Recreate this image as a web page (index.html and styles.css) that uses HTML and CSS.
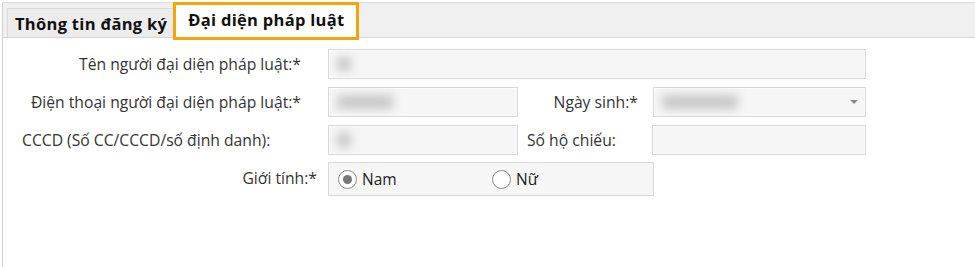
FILE: index.html
```html
<!DOCTYPE html>
<html lang="vi">
<head>
    <meta charset="UTF-8">
    <meta name="viewport" content="width=device-width, initial-scale=1.0">
    <title>Đại diện pháp luật</title>
    <link rel="stylesheet" href="styles.css">
</head>
<body>
    <div class="tabs">
        <div class="tab">Thông tin đăng ký</div>
        <div class="tab active">Đại diện pháp luật</div>
    </div>

    <div class="panel">
        <div class="form">
            <!-- Hàng 1 -->
            <label class="lbl">Tên người đại diện pháp luật:*</label>
            <div class="field wide"><span class="blur short"></span></div>

            <!-- Hàng 2 -->
            <label class="lbl">Điện thoại người đại diện pháp luật:*</label>
            <div class="field"><span class="blur"></span></div>
            <label class="lbl2 right">Ngày sinh:*</label>
            <div class="field select"><span class="blur long"></span><span class="arrow"></span></div>

            <!-- Hàng 3 -->
            <label class="lbl left">CCCD (Số CC/CCCD/số định danh):</label>
            <div class="field"><span class="blur short"></span></div>
            <label class="lbl2">Số hộ chiếu:</label>
            <div class="field"></div>

            <!-- Hàng 4 -->
            <label class="lbl gender">Giới tính:*</label>
            <div class="radios">
                <label class="radio"><span class="dot checked"></span>Nam</label>
                <label class="radio"><span class="dot"></span>Nữ</label>
            </div>
        </div>
    </div>
</body>
</html>
```
FILE: styles.css
```css
body {
    margin: 0;
    font-family: "Open Sans", sans-serif;
    background-color: #ffffff;
    color: #333;
}
.tabs {
    display: flex;
    align-items: flex-end;
    height: 34px;
    margin-top: 2px;
    margin-left: 2px;
    padding-left: 4px;
    background-color: #f0f0f0;
    border-top: 1px solid #dcdcdc;
    border-left: 1px solid #d0d0d0;
    border-bottom: 1px solid #d6d6d6;
}
.tab {
    font-weight: bold;
    font-size: 16.5px;
    letter-spacing: 0.3px;
    color: #111;
    height: 28px;
    line-height: 30px;
    padding: 0 6px 0 7px;
    background-color: #ececec;
    border-left: 1px solid #d8d8d8;
    border-top: 1px solid #d8d8d8;
}
.tab.active {
    background-color: #fff;
    border: 3px solid #f5a50a;
    height: 32px;
    line-height: 30px;
    margin-top: -3px;
    margin-bottom: -3px;
    padding: 0 11px 0 12px;
    position: relative;
}
.panel {
    margin-left: 2px;
    border-left: 1px solid #d0d0d0;
    height: 229px;
}
.form {
    display: grid;
    grid-template-columns: 325px 190px 134px 214px;
    grid-auto-rows: 30px;
    row-gap: 8px;
    padding-top: 11px;
    font-size: 15.7px;
    align-items: center;
}
.lbl {
    text-align: right;
    padding-right: 27px;
    color: #333;
    white-space: nowrap;
}
.lbl.left {
    text-align: left;
    padding-left: 19px;
}
.lbl.gender {
    padding-right: 11px;
}
.lbl2 {
    padding-left: 9px;
    white-space: nowrap;
}
.lbl2.right {
    text-align: right;
    padding-right: 14px;
}
.field {
    height: 28px;
    border: 1px solid #d8d8d8;
    background-color: #f6f6f6;
    box-shadow: inset 0 0 0 1px #fbfbfb;
    position: relative;
    overflow: hidden;
}
.field.wide {
    grid-column: 2 / 5;
    width: 536px;
}
.field.select {
    margin-left: 1px;
}
.blur {
    position: absolute;
    left: 8px;
    top: 7px;
    width: 56px;
    height: 14px;
    background-color: #c8c8c8;
    filter: blur(5px);
}
.blur.short {
    width: 14px;
}
.blur.long {
    width: 76px;
}
.arrow {
    position: absolute;
    right: 7px;
    top: 12px;
    border-left: 4px solid transparent;
    border-right: 4px solid transparent;
    border-top: 4px solid #888;
}
.radios {
    grid-column: 2 / 4;
    box-sizing: border-box;
    width: 326px;
    height: 34px;
    border: 1px solid #d8d8d8;
    background-color: #f6f6f6;
    display: flex;
    align-items: center;
    align-self: start;
    margin-top: -1px;
    padding-left: 9px;
}
.radio {
    display: flex;
    align-items: center;
    font-size: 15.5px;
    color: #222;
    width: 154px;
}
.dot {
    width: 19px;
    height: 19px;
    box-sizing: border-box;
    border: 1px solid #8a8a8a;
    border-radius: 50%;
    background-color: #fff;
    margin-right: 5px;
    position: relative;
}
.dot.checked::after {
    content: "";
    position: absolute;
    left: 4px;
    top: 4px;
    width: 9px;
    height: 9px;
    border-radius: 50%;
    background-color: #777;
}
```
